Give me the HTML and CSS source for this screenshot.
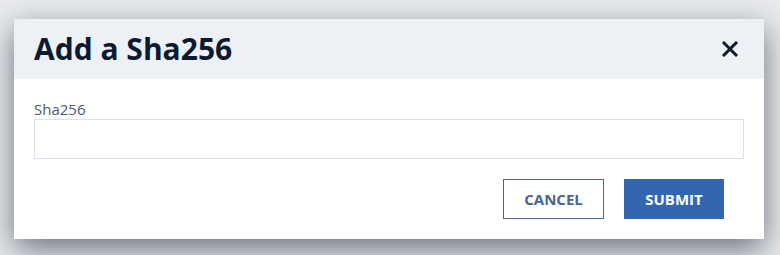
FILE: index.html
```html
<!DOCTYPE html>
<html>
<head>
<meta charset="utf-8">
<link rel="stylesheet" href="styles.css">
</head>
<body>
<div class="modal">
  <div class="modal-header">
    <h1 class="modal-title">Add a Sha256</h1>
    <button class="close-btn" aria-label="Close">
      <svg width="16" height="16" viewBox="0 0 16 16"><path d="M2 2 L14 14 M14 2 L2 14" stroke="#0e1a2c" stroke-width="3" stroke-linecap="square"/></svg>
    </button>
  </div>
  <div class="modal-body">
    <label class="field-label" for="sha">Sha256</label>
    <input id="sha" class="field-input" type="text">
    <div class="modal-footer">
      <button class="btn btn-outline">CANCEL</button>
      <button class="btn btn-primary">SUBMIT</button>
    </div>
  </div>
</div>
</body>
</html>
```
FILE: styles.css
```css
html, body {
  margin: 0;
  padding: 0;
}
body {
  background: #e9ebee;
  font-family: "Open Sans", "Noto Sans", sans-serif;
  padding: 19px 16px 0 14px;
  height: 255px;
  box-sizing: border-box;
  overflow: hidden;
}
.modal {
  width: 750px;
  background: #fff;
  box-shadow: 0 10px 30px rgba(40, 46, 62, 0.65);
}
.modal-header {
  height: 60px;
  background: #edf1f5;
  display: flex;
  align-items: center;
  justify-content: space-between;
  padding: 0 26px 0 20px;
}
.modal-title {
  margin: 0;
  font-size: 30px;
  font-weight: 700;
  color: #0c1a30;
  line-height: 1;
}
.close-btn {
  border: 0;
  background: none;
  padding: 0;
  width: 16px;
  height: 16px;
  display: flex;
}
.modal-body {
  padding: 20px;
  display: flex;
  flex-direction: column;
}
.field-label {
  font-size: 15px;
  line-height: 20px;
  color: #4e596b;
}
.field-input {
  height: 40px;
  box-sizing: border-box;
  border: 1px solid #dde0ea;
  margin: 0;
  padding: 0 10px;
  outline: none;
}
.modal-footer {
  display: flex;
  justify-content: flex-end;
  gap: 20px;
  margin-top: 20px;
  padding-right: 20px;
}
.btn {
  height: 40px;
  width: 101px;
  font-family: "Open Sans", "Noto Sans", sans-serif;
  font-size: 15px;
  font-weight: 700;
  box-sizing: border-box;
  cursor: pointer;
  padding: 0;
}
.btn-outline {
  background: #fff;
  border: 1px solid #4a6592;
  color: #4a6592;
}
.btn-primary {
  width: 100px;
  background: #3366b0;
  border: 1px solid #3366b0;
  color: #fff;
}
```
